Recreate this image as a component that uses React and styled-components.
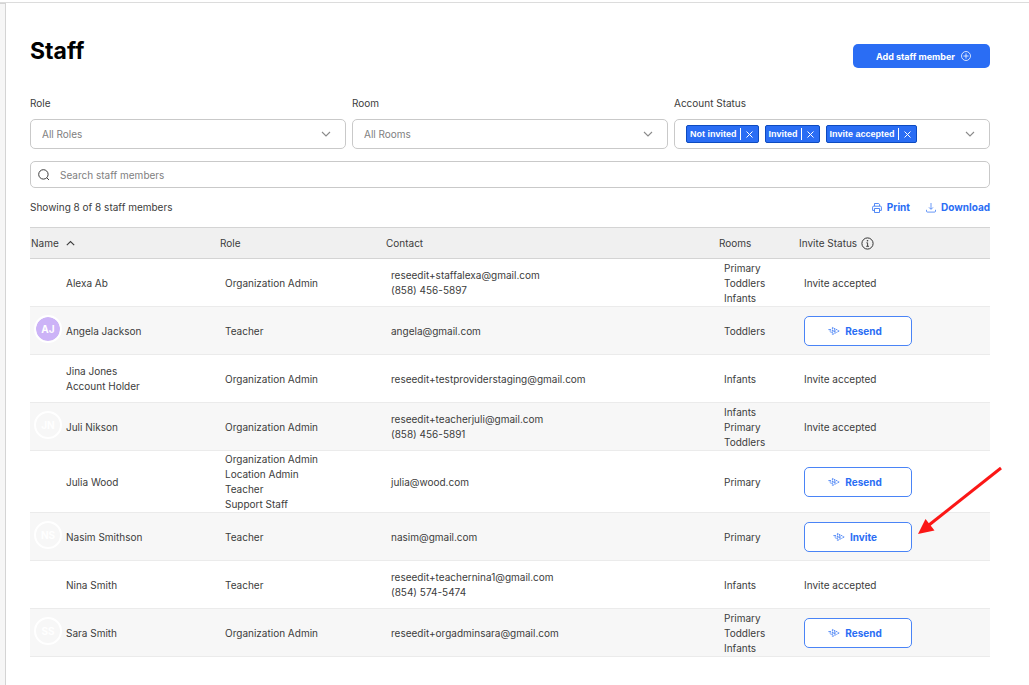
import React, { useState } from "react";
import styled, { createGlobalStyle } from "styled-components";

const staffData = [
  {
    names: ["Alexa Ab"],
    roles: ["Organization Admin"],
    contact: ["reseedit+staffalexa@gmail.com", "(858) 456-5897"],
    rooms: ["Primary", "Toddlers", "Infants"],
  },
  {
    names: ["Angela Jackson"],
    initials: "AJ",
    color: "#ccb3f7",
    roles: ["Teacher"],
    contact: ["angela@gmail.com"],
    rooms: ["Toddlers"],
    action: "Resend",
  },
  {
    names: ["Jina Jones", "Account Holder"],
    roles: ["Organization Admin"],
    contact: ["reseedit+testproviderstaging@gmail.com"],
    rooms: ["Infants"],
  },
  {
    names: ["Juli Nikson"],
    initials: "JN",
    roles: ["Organization Admin"],
    contact: ["reseedit+teacherjuli@gmail.com", "(858) 456-5891"],
    rooms: ["Infants", "Primary", "Toddlers"],
  },
  {
    names: ["Julia Wood"],
    roles: ["Organization Admin", "Location Admin", "Teacher", "Support Staff"],
    contact: ["julia@wood.com"],
    rooms: ["Primary"],
    action: "Resend",
  },
  {
    names: ["Nasim Smithson"],
    initials: "NS",
    roles: ["Teacher"],
    contact: ["nasim@gmail.com"],
    rooms: ["Primary"],
    action: "Invite",
    highlighted: true,
  },
  {
    names: ["Nina Smith"],
    roles: ["Teacher"],
    contact: ["reseedit+teachernina1@gmail.com", "(854) 574-5474"],
    rooms: ["Infants"],
  },
  {
    names: ["Sara Smith"],
    initials: "SS",
    roles: ["Organization Admin"],
    contact: ["reseedit+orgadminsara@gmail.com"],
    rooms: ["Primary", "Toddlers", "Infants"],
    action: "Resend",
  },
];

const ChevronIcon = () => (
  <svg width="10" height="6" viewBox="0 0 10 6" fill="none" aria-hidden="true">
    <path d="M1 1l4 4 4-4" stroke="#8a8a8a" strokeWidth="1.1" />
  </svg>
);

const SortIcon = () => (
  <svg width="9" height="6" viewBox="0 0 9 6" fill="none" aria-hidden="true">
    <path d="M0.8 5.2l3.7-3.7 3.7 3.7" stroke="#3c3c3c" strokeWidth="1.1" />
  </svg>
);

const SearchIcon = () => (
  <svg width="12" height="12" viewBox="0 0 12 12" fill="none" aria-hidden="true">
    <circle cx="5.4" cy="5.4" r="4.7" stroke="#3c3c3c" />
    <path d="M8.8 8.8l2.2 2.2" stroke="#3c3c3c" />
  </svg>
);

const PlusCircleIcon = () => (
  <svg width="10" height="10" viewBox="0 0 10 10" fill="none" aria-hidden="true">
    <circle cx="5" cy="5" r="4.5" stroke="#fff" strokeWidth="0.8" />
    <path d="M5 2.4v5.2M2.4 5h5.2" stroke="#fff" strokeWidth="0.8" />
  </svg>
);

const CloseIcon = () => (
  <svg width="7" height="7" viewBox="0 0 7 7" fill="none" aria-hidden="true">
    <path d="M0.5 0.5l6 6M6.5 0.5l-6 6" stroke="#fff" />
  </svg>
);

const PrintIcon = () => (
  <svg width="10" height="10" viewBox="0 0 10 10" fill="none" aria-hidden="true">
    <path
      d="M2.5 3V0.5h4.2l0.9 0.9V3M2.4 7.4H0.6V4.2q0-1 1-1h6.8q1 0 1 1v3.2H7.6M2.5 5.5h5v4h-5z"
      stroke="#2a6df4"
      strokeWidth="0.8"
    />
  </svg>
);

const DownloadIcon = () => (
  <svg width="10" height="10" viewBox="0 0 10 10" fill="none" aria-hidden="true">
    <path
      d="M5 0v6M3 4.4l2 2 2-2M0.5 6.8v1.3q0 1 1 1h7q1 0 1-1V6.8"
      stroke="#2a6df4"
      strokeWidth="0.7"
    />
  </svg>
);

const InfoIcon = () => (
  <svg width="13" height="13" viewBox="0 0 13 13" fill="none" aria-hidden="true">
    <circle cx="6.5" cy="6.5" r="5.6" stroke="#333" />
    <path d="M5.4 5.8h1.2v3.4M5.2 9.3h2.8" stroke="#333" strokeWidth="0.9" />
    <circle cx="6.5" cy="3.8" r="0.8" fill="#333" />
  </svg>
);

const SendIcon = () => (
  <svg width="12" height="10" viewBox="0 0 12 10" fill="none" aria-hidden="true">
    <path
      d="M4.4 1.4L11.2 5 4.4 8.6zM4.6 5h3.6M6.6 3.2v3.6"
      stroke="#2a6df4"
      strokeWidth="0.8"
      strokeDasharray="1.4 0.5"
    />
    <path
      d="M0.4 3.6h2.6M1.6 5h1.6M2.6 6.4h1"
      stroke="#2a6df4"
      strokeWidth="0.8"
    />
  </svg>
);

const PointerArrow = () => (
  <ArrowSvg width="88" height="70" viewBox="0 0 88 70" aria-hidden="true">
    <path d="M85 2L13 59" stroke="#fb1716" strokeWidth="3" />
    <path d="M2 68l7.5-15 9 11.5z" fill="#fb1716" />
  </ArrowSvg>
);

function Lines({ items }) {
  return items.map((item) => <Line key={item}>{item}</Line>);
}

function App() {
  const [statuses, setStatuses] = useState([
    "Not invited",
    "Invited",
    "Invite accepted",
  ]);
  const [searchTerm, setSearchTerm] = useState("");

  const removeStatus = (status) => {
    setStatuses(statuses.filter((el) => el !== status));
  };

  return (
    <>
      <GlobalStyle />
      <Shell>
        <SideEdge />
        <Main>
          <Header>
            <Title>Staff</Title>
            <AddButton type="button">
              Add staff member
              <PlusCircleIcon />
            </AddButton>
          </Header>

          <Filters>
            <Field>
              <Label htmlFor="role">Role</Label>
              <SelectBox>
                <Select id="role">
                  <option>All Roles</option>
                </Select>
                <ChevronIcon />
              </SelectBox>
            </Field>
            <Field>
              <Label htmlFor="room">Room</Label>
              <SelectBox>
                <Select id="room">
                  <option>All Rooms</option>
                </Select>
                <ChevronIcon />
              </SelectBox>
            </Field>
            <Field>
              <Label as="span" id="status-label">
                Account Status
              </Label>
              <SelectBox role="group" aria-labelledby="status-label">
                <Chips>
                  {statuses.map((status) => (
                    <Chip key={status}>
                      {status}
                      <ChipRemove
                        type="button"
                        aria-label={`Remove ${status}`}
                        onClick={() => removeStatus(status)}
                      >
                        <CloseIcon />
                      </ChipRemove>
                    </Chip>
                  ))}
                </Chips>
                <ChevronIcon />
              </SelectBox>
            </Field>
          </Filters>

          <SearchBar>
            <SearchIcon />
            <SearchInput
              type="text"
              aria-label="Search staff members"
              placeholder="Search staff members"
              value={searchTerm}
              onChange={(event) => setSearchTerm(event.target.value)}
            />
          </SearchBar>

          <Summary>
            <span>Showing 8 of 8 staff members</span>
            <Actions>
              <LinkButton type="button">
                <PrintIcon />
                Print
              </LinkButton>
              <LinkButton type="button">
                <DownloadIcon />
                Download
              </LinkButton>
            </Actions>
          </Summary>

          <Table>
            <colgroup>
              <Col $width="189px" />
              <Col $width="166px" />
              <Col $width="auto" />
              <Col $width="80px" />
              <Col $width="192px" />
            </colgroup>
            <thead>
              <tr>
                <HeadCell>
                  <HeadLabel>
                    Name
                    <SortIcon />
                  </HeadLabel>
                </HeadCell>
                <HeadCell>Role</HeadCell>
                <HeadCell>Contact</HeadCell>
                <HeadCell>Rooms</HeadCell>
                <HeadCell>
                  <HeadLabel $gap="4px">
                    Invite Status
                    <InfoIcon />
                  </HeadLabel>
                </HeadCell>
              </tr>
            </thead>
            <tbody>
              {staffData.map((staff) => (
                <Row key={staff.names[0]}>
                  <Cell>
                    <Person>
                      <Avatar $color={staff.color}>{staff.initials}</Avatar>
                      <div>
                        <Lines items={staff.names} />
                      </div>
                    </Person>
                  </Cell>
                  <Cell>
                    <Lines items={staff.roles} />
                  </Cell>
                  <Cell>
                    <Lines items={staff.contact} />
                  </Cell>
                  <Cell>
                    <Lines items={staff.rooms} />
                  </Cell>
                  <Cell>
                    {staff.action ? (
                      <ActionWrapper>
                        <ActionButton type="button">
                          <SendIcon />
                          {staff.action}
                        </ActionButton>
                        {staff.highlighted && <PointerArrow />}
                      </ActionWrapper>
                    ) : (
                      "Invite accepted"
                    )}
                  </Cell>
                </Row>
              ))}
            </tbody>
          </Table>
        </Main>
      </Shell>
    </>
  );
}

export default App;

const GlobalStyle = createGlobalStyle`
  * {
    box-sizing: border-box;
  }

  body {
    margin: 0;
    background: #fff;
    color: #3c3c3c;
    font-family: Inter, "Liberation Sans", sans-serif;
    font-size: 10px;
    line-height: 15px;
  }

  button, input, select {
    font-family: inherit;
  }
`;

const Shell = styled.div`
  display: flex;
  min-height: 100vh;
  padding-top: 2px;
  background: linear-gradient(#fff 2px, #dcdcdc 2px, #dcdcdc 3px, #fff 3px);
`;

const SideEdge = styled.div`
  width: 6px;
  margin-top: 1px;
  flex-shrink: 0;
  background: #f6f6f6;
  border-top: 1px solid #d4d4d4;
  border-right: 1px solid #d4d4d4;
`;

const Main = styled.main`
  flex: 1;
  min-width: 0;
  padding: 34px 39px 28px 24px;
`;

const Header = styled.header`
  display: flex;
  align-items: center;
  justify-content: space-between;
  height: 40px;
`;

const Title = styled.h1`
  margin: 0;
  padding-bottom: 10px;
  color: #000;
  font-size: 23px;
  font-weight: 700;
  line-height: 30px;
`;

const AddButton = styled.button`
  display: flex;
  align-items: center;
  justify-content: center;
  gap: 6px;
  width: 137px;
  height: 24px;
  padding: 0 0 0 4px;
  border: none;
  border-radius: 5px;
  background: #2a6df4;
  color: #fff;
  font-size: 9px;
  font-weight: 700;
  cursor: pointer;
`;

const Filters = styled.div`
  display: grid;
  grid-template-columns: repeat(3, 1fr);
  gap: 6px;
  margin-top: 20px;
`;

const Field = styled.div`
  display: flex;
  flex-direction: column;
  gap: 8px;
`;

const Label = styled.label`
  line-height: 15px;
`;

const SelectBox = styled.div`
  display: flex;
  align-items: center;
  height: 30px;
  padding-right: 14px;
  border: 1px solid #c9c9c9;
  border-radius: 5px;
  background: #fff;
`;

const Select = styled.select`
  flex: 1;
  min-width: 0;
  height: 28px;
  padding: 0 11px;
  border: none;
  appearance: none;
  background: transparent;
  color: #808080;
  font-size: 10px;
`;

const Chips = styled.div`
  display: flex;
  flex: 1;
  gap: 6px;
  padding-left: 11px;
`;

const Chip = styled.span`
  display: flex;
  align-items: center;
  height: 18px;
  padding: 0 5px 0 3px;
  border: 1px solid #0d4bc0;
  border-radius: 2px;
  background: #2a6df4;
  color: #fff;
  font-family: "Liberation Sans", sans-serif;
  font-size: 9px;
  font-weight: 700;
  white-space: nowrap;
`;

const ChipRemove = styled.button`
  display: flex;
  align-items: center;
  height: 12px;
  margin-left: 3px;
  padding: 0 0 0 5px;
  border: none;
  border-left: 1px solid #fff;
  background: none;
  cursor: pointer;
`;

const SearchBar = styled.div`
  display: flex;
  align-items: center;
  gap: 10px;
  height: 27px;
  margin-top: 12px;
  padding: 0 7px;
  border: 1px solid #c9c9c9;
  border-radius: 5px;
`;

const SearchInput = styled.input`
  flex: 1;
  height: 25px;
  padding: 0;
  border: none;
  outline: none;
  color: #3c3c3c;
  font-size: 10px;

  &::placeholder {
    color: #808080;
    opacity: 1;
  }
`;

const Summary = styled.div`
  display: flex;
  align-items: center;
  justify-content: space-between;
  height: 39px;
`;

const Actions = styled.div`
  display: flex;
  gap: 16px;
`;

const LinkButton = styled.button`
  display: flex;
  align-items: center;
  gap: 5px;
  padding: 0;
  border: none;
  background: none;
  color: #2a6df4;
  font-size: 10px;
  font-weight: 700;
  line-height: 15px;
  cursor: pointer;
`;

const Table = styled.table`
  width: 100%;
  table-layout: fixed;
  border-spacing: 0;
`;

const Col = styled.col`
  width: ${({ $width }) => $width};
`;

const HeadCell = styled.th`
  height: 32px;
  padding: 0 1px;
  border-top: 1px solid #d4d4d4;
  border-bottom: 1px solid #d4d4d4;
  background: #f0f0f0;
  font-weight: 400;
  text-align: left;
`;

const HeadLabel = styled.span`
  display: flex;
  align-items: center;
  gap: ${({ $gap }) => $gap || "7px"};
`;

const Row = styled.tr`
  &:nth-child(even) {
    background: #f7f7f7;
  }
`;

const Cell = styled.td`
  height: 48px;
  padding: 1px 6px 0;
  border-bottom: 1px solid #ebebeb;
`;

const Line = styled.div`
  line-height: 15px;
`;

const Person = styled.div`
  display: flex;
  align-items: center;
  gap: 4px;
`;

const Avatar = styled.span`
  display: flex;
  align-items: center;
  justify-content: center;
  flex-shrink: 0;
  width: 28px;
  height: 28px;
  margin: 0 0 4px -2px;
  border: 2px solid #fff;
  border-radius: 50%;
  background: ${({ $color }) => $color || "transparent"};
  background-clip: padding-box;
  color: #fff;
  font-size: 10px;
  font-weight: 700;
`;

const ActionWrapper = styled.div`
  position: relative;
  width: 108px;
  padding-bottom: 1px;
`;

const ActionButton = styled.button`
  display: flex;
  align-items: center;
  justify-content: center;
  gap: 5px;
  width: 100%;
  height: 30px;
  padding: 0 6px 0 0;
  border: 1px solid #4a84f6;
  border-radius: 5px;
  background: #fff;
  color: #2a6df4;
  font-size: 10px;
  font-weight: 700;
  cursor: pointer;
`;

const ArrowSvg = styled.svg`
  position: absolute;
  left: 112px;
  bottom: 17px;
`;
